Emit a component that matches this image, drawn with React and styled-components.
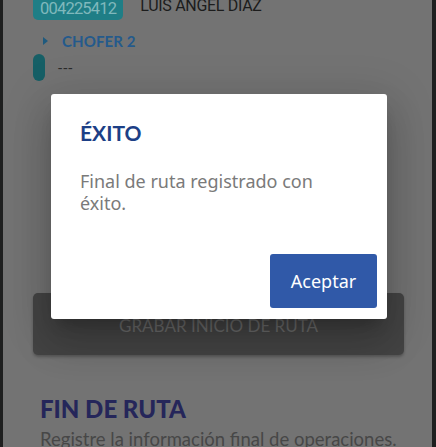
import React from "react";
import styled, { createGlobalStyle } from "styled-components";

const Global = createGlobalStyle`
  html, body {
    margin: 0;
    padding: 0;
    background: #1e1f1f;
  }
  * { box-sizing: border-box; }
`;

const Screen = styled.div`
  position: relative;
  width: 429px;
  height: 447px;
  margin-left: 3px;
  background: #737373;
  overflow: hidden;
  font-family: Lato, "Noto Sans", sans-serif;
`;

const Content = styled.div`
  display: flex;
  flex-direction: column;
  padding: 0 28px 0 30px;
  margin-top: -8px;
`;

const Row = styled.div`
  display: flex;
  align-items: center;
  gap: ${p => p.gap || 16}px;
`;

const Badge = styled.div`
  background: #1f7e86;
  color: #7fb8bc;
  font-family: Roboto, sans-serif;
  font-size: 16.5px;
  height: 28px;
  padding: 8px 7px 0 7px;
  border-radius: 0 0 5px 5px;
  line-height: 18px;
  letter-spacing: -0.8px;
`;

const Name = styled.span`
  font-family: Roboto, sans-serif;
  font-size: 16px;
  color: #1c1c1c;
  letter-spacing: -0.3px;
  padding-bottom: 2px;
`;

const Section = styled(Row)`
  margin-top: 12px;
  padding-left: 10px;
`;

const Caret = styled.span`
  width: 0;
  height: 0;
  border-top: 4px solid transparent;
  border-bottom: 4px solid transparent;
  border-left: 5px solid #1f5a7e;
`;

const SectionTitle = styled.span`
  color: #245a8c;
  font-weight: 700;
  font-size: 15px;
  letter-spacing: 0.1px;
`;

const Pill = styled.div`
  width: 12px;
  height: 27px;
  border-radius: 6px;
  background: #165f66;
`;

const Dashes = styled.span`
  color: #2a2a2a;
  font-family: Roboto, sans-serif;
  font-size: 15px;
  letter-spacing: 1px;
`;

const Spacer = styled.div`
  height: ${p => p.h}px;
`;

const GhostButton = styled.div`
  height: 62px;
  border-radius: 5px;
  background: #444444;
  color: #6b6b6b;
  font-size: 17px;
  display: flex;
  align-items: center;
  justify-content: center;
  padding-top: 2px;
  box-shadow: 0 2px 3px rgba(0, 0, 0, 0.25);
`;

const BigTitle = styled.h2`
  margin: 0 0 5px 7px;
  font-size: 24px;
  font-weight: 900;
  color: #25265a;
  line-height: 28px;
`;

const Sub = styled.p`
  margin: 0 0 0 7px;
  font-size: 18.5px;
  line-height: 22px;
  color: #474747;
  white-space: nowrap;
`;

const Dialog = styled.div`
  position: absolute;
  left: 48px;
  top: 94px;
  width: 336px;
  height: 225px;
  background: #ffffff;
  border-radius: 3px;
  padding: 26px 10px 11px 29px;
  display: flex;
  flex-direction: column;
  box-shadow: 0 11px 15px -7px rgba(0, 0, 0, 0.2),
    0 24px 38px 3px rgba(0, 0, 0, 0.14), 0 9px 46px 8px rgba(0, 0, 0, 0.12);
`;

const DialogTitle = styled.h3`
  margin: 0;
  font-size: 21px;
  font-weight: 700;
  color: #1c3f86;
  line-height: 26px;
`;

const DialogText = styled.p`
  margin: 24px 0 0 0;
  font-family: "Noto Sans", sans-serif;
  font-size: 18px;
  line-height: 22px;
  color: #7a7a7a;
  padding-right: 30px;
`;

const Actions = styled.div`
  margin-top: auto;
  display: flex;
  justify-content: flex-end;
`;

const Primary = styled.button`
  width: 107px;
  height: 54px;
  border: none;
  border-radius: 3px;
  background: #3059a8;
  color: #ffffff;
  font-family: "Noto Sans", sans-serif;
  font-size: 18px;
`;

export default function App() {
  return (
    <>
      <Global />
      <Screen>
        <Content>
          <Row gap={17}>
            <Badge>004225412</Badge>
            <Name>LUIS ANGEL DIAZ</Name>
          </Row>
          <Section gap={14}>
            <Caret />
            <SectionTitle>CHOFER 2</SectionTitle>
          </Section>
          <Row gap={13} style={{ marginTop: 4 }}>
            <Pill />
            <Dashes>---</Dashes>
          </Row>
          <Spacer h={212} />
          <GhostButton>GRABAR INICIO DE RUTA</GhostButton>
          <Spacer h={40} />
          <BigTitle>FIN DE RUTA</BigTitle>
          <Sub>Registre la información final de operaciones.</Sub>
        </Content>
        <Dialog>
          <DialogTitle>ÉXITO</DialogTitle>
          <DialogText>Final de ruta registrado con éxito.</DialogText>
          <Actions>
            <Primary>Aceptar</Primary>
          </Actions>
        </Dialog>
      </Screen>
    </>
  );
}
